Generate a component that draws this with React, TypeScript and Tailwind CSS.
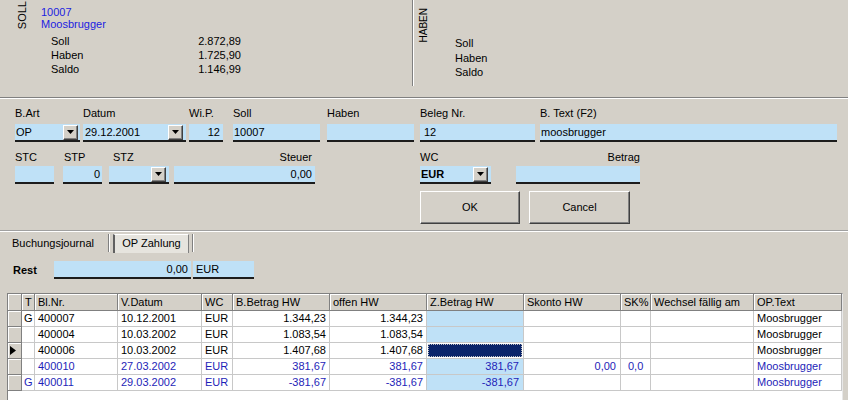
import React from 'react';

const font = "font-['Liberation_Sans',Arial,sans-serif]";

const Arrow = () => (
  <svg width="7" height="4" viewBox="0 0 7 4">
    <path d="M0 0h7L3.5 4z" fill="#000" />
  </svg>
);

const DropButton = () => (
  <div className="w-[15px] h-[15px] flex items-center justify-center bg-[#d4d0c8] border border-t-white border-l-white border-r-[#404040] border-b-[#404040] shadow-[inset_-1px_-1px_0_#808080]">
    <Arrow />
  </div>
);

const Input = ({ className = '', children }: { className?: string; children?: React.ReactNode }) => (
  <div className={`h-[18px] bg-[#bfe1f7] border-b-2 border-[#1c1c1c] flex items-center text-[11px] leading-none ${className}`}>
    {children}
  </div>
);

const WinButton = ({ className = '', children }: { className?: string; children: React.ReactNode }) => (
  <div
    className={`h-[33px] flex items-center justify-center bg-[#d4d0c8] border border-t-white border-l-white border-r-[#404040] border-b-[#404040] shadow-[inset_-1px_-1px_0_#808080] text-[11px] ${className}`}>
    {children}
  </div>
);

interface Row {
  t: string;
  nr: string;
  datum: string;
  bb: string;
  offen: string;
  zb: string;
  sk: string;
  skp: string;
  blue?: boolean;
  sel?: boolean;
}

const rows: Row[] = [
  { t: 'G', nr: '400007', datum: '10.12.2001', bb: '1.344,23', offen: '1.344,23', zb: '', sk: '', skp: '' },
  { t: '', nr: '400004', datum: '10.03.2002', bb: '1.083,54', offen: '1.083,54', zb: '', sk: '', skp: '' },
  { t: '', nr: '400006', datum: '10.03.2002', bb: '1.407,68', offen: '1.407,68', zb: '', sk: '', skp: '', sel: true },
  { t: '', nr: '400010', datum: '27.03.2002', bb: '381,67', offen: '381,67', zb: '381,67', sk: '0,00', skp: '0,0', blue: true },
  { t: 'G', nr: '400011', datum: '29.03.2002', bb: '-381,67', offen: '-381,67', zb: '-381,67', sk: '', skp: '', blue: true },
];

const headers = ['', 'T', 'Bl.Nr.', 'V.Datum', 'WC', 'B.Betrag HW', 'offen HW', 'Z.Betrag HW', 'Skonto HW', 'SK%', 'Wechsel fällig am', 'OP.Text'];

const gridCols = 'grid grid-cols-[14px_13px_83px_84px_31px_97px_97px_97px_97px_30px_103px_88px]';

const cell = 'h-[16px] flex items-center border-r border-b border-[#c8c8c8] bg-white overflow-hidden whitespace-nowrap';

export default function App() {
  return (
    <div className={`w-[848px] h-[400px] overflow-hidden bg-[#d4d0c8] text-black text-[11px] ${font}`}>
      {/* Kontoübersicht */}
      <div className="flex h-[97px]">
        <div className="flex w-[413px] h-[86px] border-r border-[#808080] overflow-hidden">
          <div className="w-[41px] pl-[17px] pt-[1px]">
            <div className="[writing-mode:vertical-rl] rotate-180 text-[11px] leading-[11px]">SOLL</div>
          </div>
          <div className="flex flex-col">
            <div className="mt-[6px] leading-[12px] text-[#1c1ce0]">10007</div>
            <div className="leading-[12px] text-[#1c1ce0]">Moosbrugger</div>
            <div className="mt-[4px] ml-[10px] w-[190px] flex flex-col leading-[14px]">
              <div className="flex justify-between"><span>Soll</span><span>2.872,89</span></div>
              <div className="flex justify-between"><span>Haben</span><span>1.725,90</span></div>
              <div className="flex justify-between"><span>Saldo</span><span>1.146,99</span></div>
            </div>
          </div>
        </div>
        <div className="w-[1px] h-[86px] bg-white" />
        <div className="flex">
          <div className="w-[41px] pl-[5px] pt-[8px]">
            <div className="[writing-mode:vertical-rl] rotate-180 text-[10px] leading-[10px]">HABEN</div>
          </div>
          <div className="flex flex-col pt-[36px] leading-[14.5px]">
            <span>Soll</span>
            <span>Haben</span>
            <span>Saldo</span>
          </div>
        </div>
      </div>
      <div className="h-[1px] bg-[#808080]" />
      <div className="h-[1px] bg-white" />

      {/* Buchungsmaske */}
      <div className="flex pt-[7px] pl-[15px]">
        <div className="flex flex-col w-[65px]">
          <span className="h-[14px] leading-[14px]">B.Art</span>
          <Input className="mt-[4px] justify-between pl-[1px] pr-[2px]">
            <span>OP</span>
            <DropButton />
          </Input>
        </div>
        <div className="flex flex-col w-[103px] ml-[3px]">
          <span className="h-[14px] leading-[14px]">Datum</span>
          <Input className="mt-[4px] justify-between pl-[2px] pr-[3px]">
            <span>29.12.2001</span>
            <DropButton />
          </Input>
        </div>
        <div className="flex flex-col w-[34px] ml-[3px]">
          <span className="h-[14px] leading-[14px]">Wi.P.</span>
          <Input className="mt-[4px] justify-end pr-[3px]">12</Input>
        </div>
        <div className="flex flex-col w-[87px] ml-[10px]">
          <span className="h-[14px] leading-[14px]">Soll</span>
          <Input className="mt-[4px] pl-[1px]">10007</Input>
        </div>
        <div className="flex flex-col w-[87px] ml-[7px]">
          <span className="h-[14px] leading-[14px]">Haben</span>
          <Input className="mt-[4px]" />
        </div>
        <div className="flex flex-col w-[115px] ml-[6px]">
          <span className="h-[14px] leading-[14px]">Beleg Nr.</span>
          <Input className="mt-[4px] pl-[4px]">12</Input>
        </div>
        <div className="flex flex-col w-[297px] ml-[5px]">
          <span className="h-[14px] leading-[14px]">B. Text (F2)</span>
          <Input className="mt-[4px] pl-[1px]">moosbrugger</Input>
        </div>
      </div>

      <div className="flex pl-[15px] mt-[8px]">
        <div className="flex flex-col w-[39px]">
          <span className="h-[14px] leading-[14px]">STC</span>
          <Input className="mt-[2px]" />
        </div>
        <div className="flex flex-col w-[39px] ml-[9px]">
          <span className="h-[14px] leading-[14px] pl-[1px]">STP</span>
          <Input className="mt-[2px] justify-end pr-[2px]">0</Input>
        </div>
        <div className="flex flex-col w-[60px] ml-[7px]">
          <span className="h-[14px] leading-[14px] pl-[4px]">STZ</span>
          <Input className="mt-[2px] justify-end pr-[3px]">
            <DropButton />
          </Input>
        </div>
        <div className="flex flex-col w-[141px] ml-[5px]">
          <span className="h-[14px] leading-[14px] text-right pr-[3px]">Steuer</span>
          <Input className="mt-[2px] justify-end pr-[3px]">0,00</Input>
        </div>

        <div className="flex flex-col ml-[105px]">
          <div className="flex">
            <div className="flex flex-col w-[71px]">
              <span className="h-[14px] leading-[14px]">WC</span>
              <Input className="mt-[2px] justify-between pl-[1px] pr-[3px]">
                <span className="font-bold">EUR</span>
                <DropButton />
              </Input>
            </div>
            <div className="flex flex-col w-[124px] ml-[25px]">
              <span className="h-[14px] leading-[14px] text-right">Betrag</span>
              <Input className="mt-[2px]" />
            </div>
          </div>
          <div className="flex mt-[7px]">
            <WinButton className="w-[100px]">OK</WinButton>
            <WinButton className="w-[101px] ml-[9px]">Cancel</WinButton>
          </div>
        </div>
      </div>

      <div className="mt-[6px] h-[1px] bg-[#a0a0a0]" />
      <div className="h-[1px] bg-white" />

      {/* Reiter */}
      <div className="flex items-center h-[20px] mt-[1px]">
        <span className="pl-[12px] w-[108px]">Buchungsjournal</span>
        <div className="w-[1px] h-[18px] bg-[#808080]" />
        <div className="w-[1px] h-[18px] bg-white" />
        <div className="ml-[3px] w-[76px] h-[19px] flex items-center justify-center bg-[#e6e4de] border-l-2 border-l-[#606060] border-t border-t-white border-r border-r-[#808080]">
          OP Zahlung
        </div>
        <div className="ml-[3px] w-[1px] h-[18px] bg-[#808080]" />
        <div className="w-[1px] h-[18px] bg-white" />
      </div>

      <div className="flex items-center mt-[8px]">
        <span className="pl-[13px] w-[54px] font-bold">Rest</span>
        <Input className="w-[137px] justify-end pr-[3px]">0,00</Input>
        <Input className="w-[61px] ml-[2px] pl-[3px]">EUR</Input>
      </div>

      {/* Tabelle */}
      <div className="mt-[14px] ml-[7px] w-[836px] h-[120px] bg-white border border-t-[#808080] border-l-[#808080] border-r-[#e8e8e8] border-b-[#e8e8e8] overflow-hidden">
        <div className={gridCols}>
          {headers.map((h, i) => (
            <div
              key={i}
              className="h-[17px] flex items-center pl-[3px] bg-[#d4d0c8] border-r border-b border-[#808080] shadow-[inset_1px_1px_0_white] whitespace-nowrap overflow-hidden">
              {h}
            </div>
          ))}
          {rows.map((r, i) => {
            const tc = r.blue ? 'text-[#1e1eb8]' : 'text-black';
            return (
              <React.Fragment key={i}>
                <div className="h-[16px] flex items-center pl-[2px] bg-[#d4d0c8] border-r border-b border-[#808080] shadow-[inset_1px_1px_0_white]">
                  {r.sel && (
                    <svg width="6" height="9" viewBox="0 0 6 9">
                      <path d="M0 0l6 4.5L0 9z" fill="#000" />
                    </svg>
                  )}
                </div>
                <div className={`${cell} ${tc} pl-[2px]`}>{r.t}</div>
                <div className={`${cell} ${tc} pl-[3px]`}>{r.nr}</div>
                <div className={`${cell} ${tc} pl-[3px]`}>{r.datum}</div>
                <div className={`${cell} ${tc} pl-[3px]`}>EUR</div>
                <div className={`${cell} ${tc} justify-end pr-[3px]`}>{r.bb}</div>
                <div className={`${cell} ${tc} justify-end pr-[3px]`}>{r.offen}</div>
                {r.sel ? (
                  <div className={`${cell} p-[1px]`}>
                    <div className="w-full h-full bg-[#0a246a] border border-dotted border-[#c0c0c0]" />
                  </div>
                ) : (
                  <div className={`${cell} ${tc} !bg-[#bfe1f7] justify-end pr-[4px]`}>{r.zb}</div>
                )}
                <div className={`${cell} ${tc} justify-end pr-[4px]`}>{r.sk}</div>
                <div className={`${cell} ${tc} pl-[7px]`}>{r.skp}</div>
                <div className={`${cell}`} />
                <div className={`${cell} ${tc} pl-[3px]`}>Moosbrugger</div>
              </React.Fragment>
            );
          })}
        </div>
      </div>
    </div>
  );
}
